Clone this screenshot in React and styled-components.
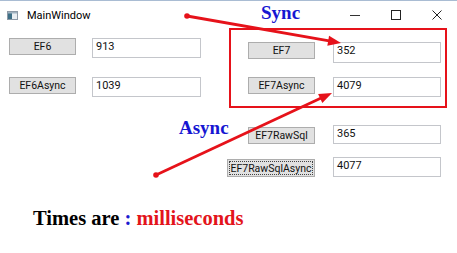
import React from "react";
import styled, { createGlobalStyle } from "styled-components";

const GlobalStyle = createGlobalStyle`
  html, body { margin: 0; padding: 0; background: #ffffff; overflow: hidden; }
  * { box-sizing: border-box; }
`;

const Window = styled.div`
  position: relative;
  width: 457px;
  height: 253px;
  background: #ffffff;
  border-top: 1px solid #a9bcd3;
  font-family: Roboto, "Noto Sans", sans-serif;
  color: #000;
`;

const TitleBar = styled.div`
  height: 28px;
  display: flex;
  align-items: center;
  padding-left: 7px;
`;

const Title = styled.span`
  margin-left: 9px;
  font-size: 11px;
  color: #000;
`;

const Controls = styled.div`
  margin-left: auto;
  display: flex;
  height: 100%;
`;

const Control = styled.div`
  width: 41px;
  height: 100%;
  display: flex;
  align-items: center;
  justify-content: center;
`;

const Content = styled.div`
  display: flex;
  justify-content: space-between;
  padding: 0 16px 0 9px;
`;

const Column = styled.div`
  display: flex;
  flex-direction: column;
  align-items: ${(p) => (p.$right ? "flex-end" : "flex-start")};
  padding-top: ${(p) => p.$top}px;
`;

const Row = styled.div`
  display: flex;
  align-items: ${(p) => p.$align || "flex-start"};
  gap: ${(p) => p.$gap}px;
  margin-top: ${(p) => p.$mt || 0}px;
`;

const Button = styled.div`
  width: ${(p) => p.$w}px;
  height: ${(p) => p.$h || 17}px;
  background: #e1e1e1;
  border: 1px solid #adadad;
  display: flex;
  align-items: center;
  justify-content: center;
  font-size: 10.5px;
  color: #111;
  white-space: nowrap;
  outline: ${(p) => (p.$focused ? "1px dotted #444" : "none")};
  outline-offset: -3px;
`;

const TextBox = styled.div`
  width: ${(p) => p.$w}px;
  height: ${(p) => p.$h || 20}px;
  border: 1px solid #c4c6cb;
  background: #fff;
  font-size: 11px;
  line-height: 16px;
  padding-left: 3px;
  color: #111;
`;

const Caption = styled.div`
  padding: 29px 0 0 33px;
  font-family: "Liberation Serif", "Times New Roman", serif;
  font-weight: bold;
  font-size: 20.5px;
  line-height: 24px;
  color: #000;
`;

const Colon = styled.span`
  color: #1c1ccf;
`;

const Unit = styled.span`
  color: #e3141b;
`;

const Label = styled.div`
  position: absolute;
  left: ${(p) => p.$x}px;
  top: ${(p) => p.$y}px;
  font-family: "Liberation Serif", "Times New Roman", serif;
  font-weight: bold;
  font-size: 19px;
  line-height: 19px;
  color: #1616d2;
`;

const Frame = styled.div`
  position: absolute;
  left: 229px;
  top: 27px;
  width: 218px;
  height: 80px;
  border: 2px solid #e6121a;
`;

const Overlay = styled.svg`
  position: absolute;
  left: 0;
  top: 0;
  pointer-events: none;
`;

function Arrow({ from, to }) {
  const [x1, y1] = from;
  const [x2, y2] = to;
  const dx = x2 - x1;
  const dy = y2 - y1;
  const len = Math.hypot(dx, dy);
  const ux = dx / len;
  const uy = dy / len;
  const hl = 13;
  const hw = 5;
  const bx = x2 - ux * hl;
  const by = y2 - uy * hl;
  const px = -uy * hw;
  const py = ux * hw;
  return (
    <g fill="#e6121a" stroke="#e6121a">
      <circle cx={x1} cy={y1} r="2.8" stroke="none" />
      <line x1={x1} y1={y1} x2={bx + ux} y2={by + uy} strokeWidth="2.8" />
      <polygon
        stroke="none"
        points={`${x2},${y2} ${bx + px},${by + py} ${bx - px},${by - py}`}
      />
    </g>
  );
}

function AppIcon() {
  return (
    <svg width="11" height="9" viewBox="0 0 11 9">
      <rect x="0.5" y="0.5" width="10" height="8" fill="#e9eef2" stroke="#8d99a6" />
      <rect x="1" y="1" width="4" height="7" fill="#3d6f86" />
      <rect x="1" y="1" width="9" height="1.5" fill="#9fb2c0" />
    </svg>
  );
}

export default function App() {
  return (
    <>
      <GlobalStyle />
      <Window>
        <TitleBar>
          <AppIcon />
          <Title>MainWindow</Title>
          <Controls>
            <Control>
              <svg width="10" height="10" viewBox="0 0 10 10">
                <line x1="0" y1="5.5" x2="10" y2="5.5" stroke="#333" strokeWidth="1" />
              </svg>
            </Control>
            <Control>
              <svg width="10" height="10" viewBox="0 0 10 10">
                <rect x="0.5" y="0.5" width="9" height="9" fill="none" stroke="#222" strokeWidth="1" />
              </svg>
            </Control>
            <Control>
              <svg width="10" height="10" viewBox="0 0 10 10">
                <path d="M0.5 0.5 L9.5 9.5 M9.5 0.5 L0.5 9.5" stroke="#222" strokeWidth="1" />
              </svg>
            </Control>
          </Controls>
        </TitleBar>
        <Content>
          <Column $top={9}>
            <Row $gap={16}>
              <Button $w={67}>EF6</Button>
              <TextBox $w={109}>913</TextBox>
            </Row>
            <Row $gap={16} $mt={19}>
              <Button $w={67}>EF6Async</Button>
              <TextBox $w={109}>1039</TextBox>
            </Row>
          </Column>
          <Column $top={13} $right>
            <Row $gap={18}>
              <Button $w={67}>EF7</Button>
              <TextBox $w={108} $h={21}>352</TextBox>
            </Row>
            <Row $gap={18} $mt={14}>
              <Button $w={67}>EF7Async</Button>
              <TextBox $w={108}>4079</TextBox>
            </Row>
            <Row $gap={18} $mt={28} $align="flex-end">
              <Button $w={67}>EF7RawSql</Button>
              <TextBox $w={108} $h={19}>365</TextBox>
            </Row>
            <Row $gap={18} $mt={13} $align="flex-end">
              <Button $w={88} $h={18} $focused>EF7RawSqlAsync</Button>
              <TextBox $w={108}>4077</TextBox>
            </Row>
          </Column>
        </Content>
        <Caption>
          Times are <Colon>:</Colon> <Unit>milliseconds</Unit>
        </Caption>
        <Label $x={261} $y={2}>Sync</Label>
        <Label $x={179} $y={117}>Async</Label>
        <Frame />
        <Overlay width="457" height="253" viewBox="0 0 457 253">
          <Arrow from={[187, 15]} to={[341, 42]} />
          <Arrow from={[156, 174]} to={[332, 92]} />
        </Overlay>
      </Window>
    </>
  );
}
